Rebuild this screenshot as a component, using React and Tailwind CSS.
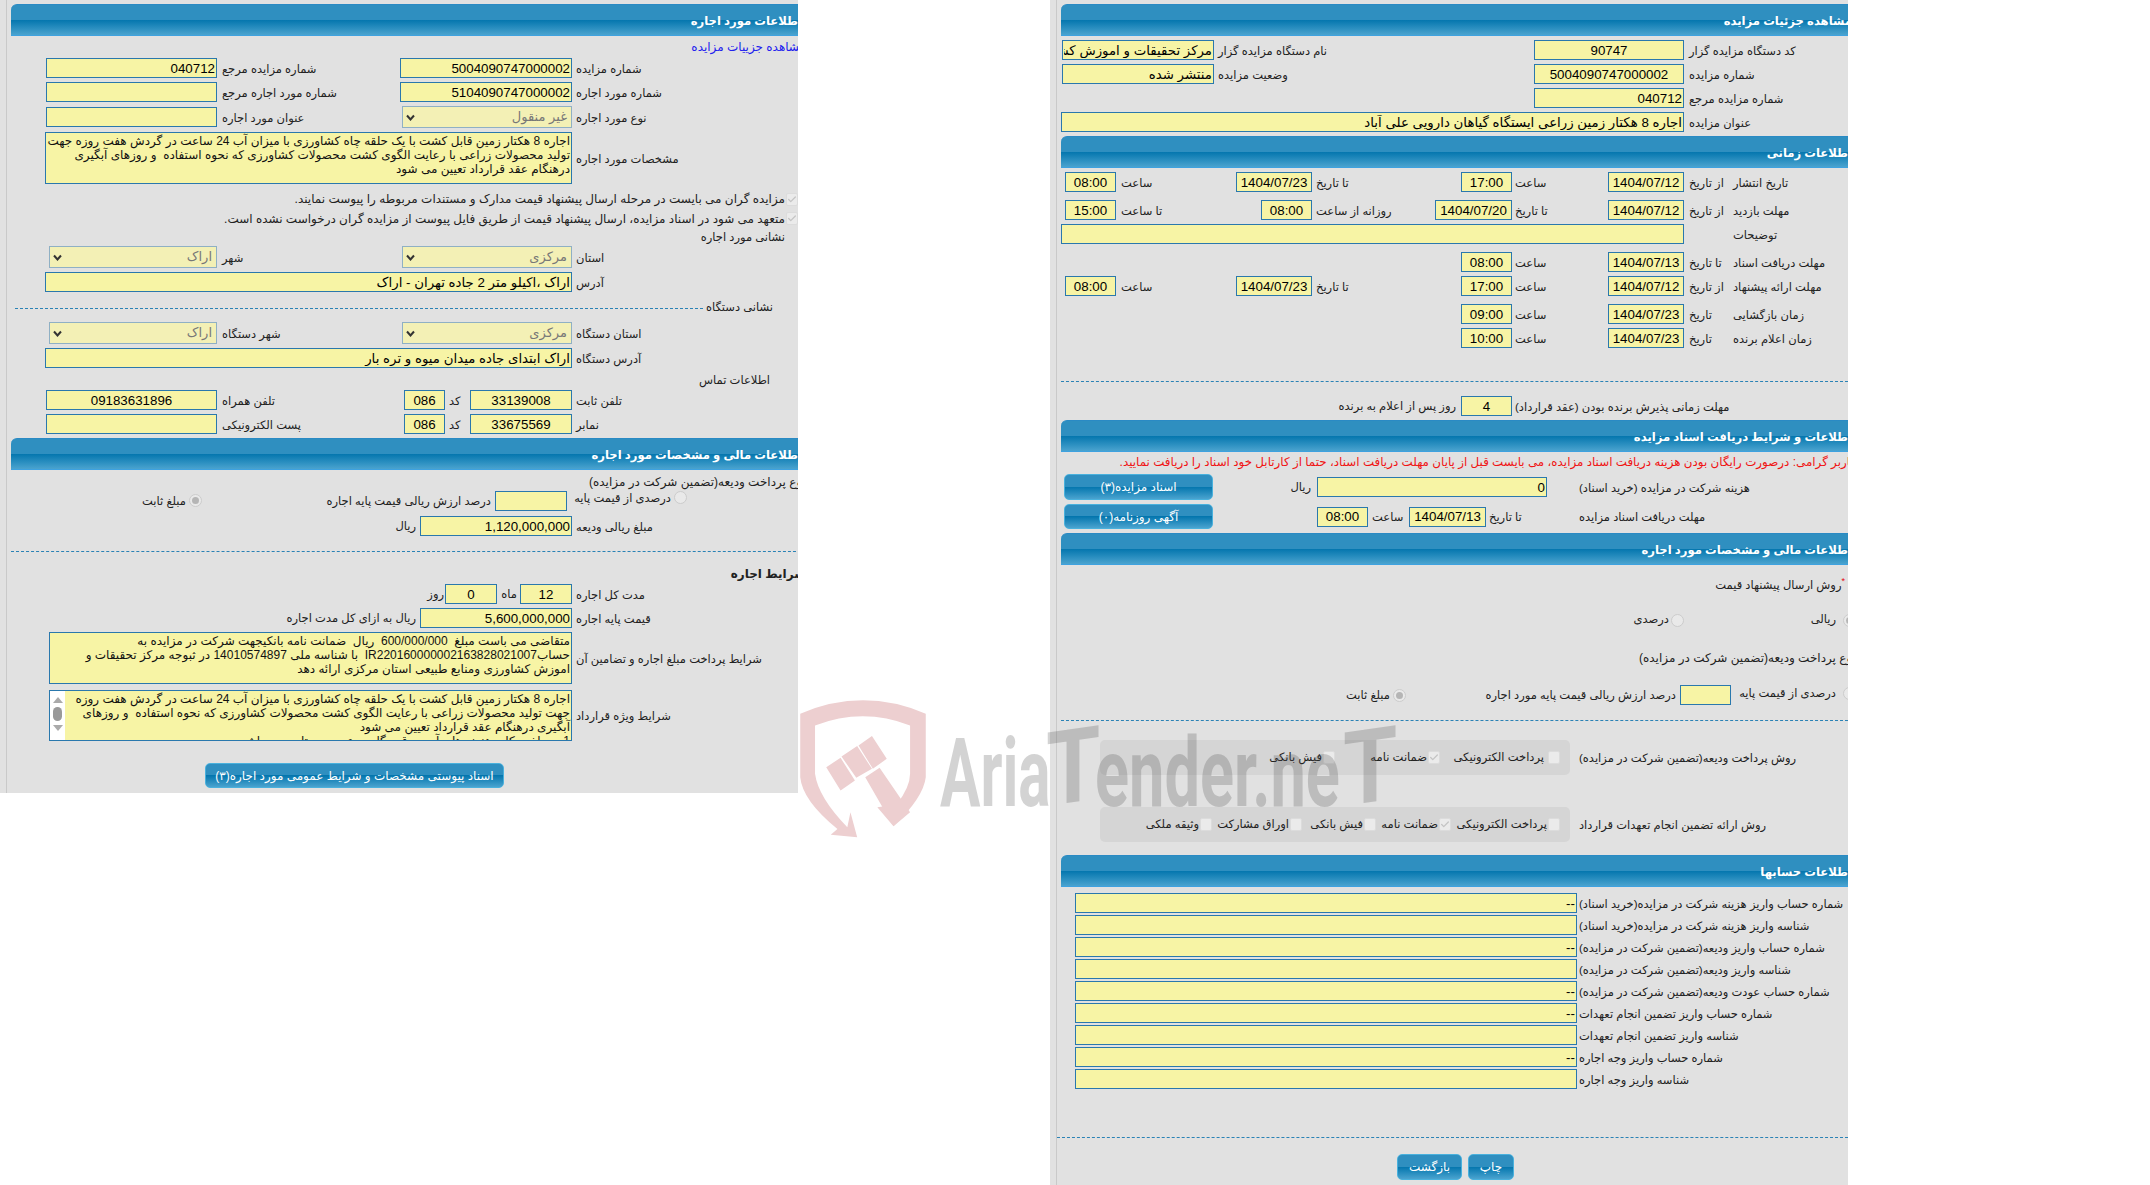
import React from 'react'
import { Check } from 'lucide-react'

const FONT = 'font-["Liberation_Sans","DejaVu_Sans",sans-serif]'
const GRAD = 'bg-[linear-gradient(#2f8fc0_0%,#2f8fc0_50%,#0476ae_50%,#4aa3cf_100%)]'

function Head({ title, className = '' }) {
  return (
    <div className={`ml-[4px] h-[32px] rounded-tl-[6px] border-t border-b border-t-[#2a8ac4] border-b-[#3ea2e0] ${GRAD} flex items-center pt-[2px] pr-[4px] text-[11.6px] font-bold text-white whitespace-nowrap ${className}`}>
      {title}
    </div>
  )
}

function Row({ children, className = '' }) {
  return <div className={`flex items-center h-[20px] ${className}`}>{children}</div>
}

// text sits at the left of its cell, next to the field
function Lbl({ children, className = '' }) {
  return (
    <div className={`shrink-0 flex justify-end pt-[3px] whitespace-nowrap text-[11.5px] text-[#222] ${className}`}>
      <span>{children}</span>
    </div>
  )
}

function Txt({ children, size = 'text-[11.5px]', className = '' }) {
  return <div className={`shrink-0 whitespace-nowrap text-[#222] ${size} ${className}`}>{children}</div>
}

function Inp({ value = '', className = '' }) {
  return (
    <input
      readOnly
      value={value}
      className={`shrink-0 h-[20px] border border-[#2a78ad] bg-[#f7f4a5] px-[1px] text-[13.33px] text-black outline-none ${FONT} ${className}`}
    />
  )
}

function Sel({ value, className = '' }) {
  return (
    <div className={`shrink-0 h-[22px] border border-[#8fb0c4] bg-[#f3f0b5] flex items-center justify-between pr-[4px] pl-[3px] text-[13px] text-[#777] ${className}`}>
      <span>{value}</span>
      <svg width="9" height="7" viewBox="0 0 9 7"><path d="M1 1.5 L4.5 5.5 L8 1.5" fill="none" stroke="#333" strokeWidth="2" /></svg>
    </div>
  )
}

function Radio({ on, className = '' }) {
  return (
    <span className={`shrink-0 w-[13px] h-[13px] rounded-full border border-[#ccc] bg-[#e9e9e9] flex items-center justify-center ${className}`}>
      {on && <span className="w-[7px] h-[7px] rounded-full bg-[#b5b5b5]" />}
    </span>
  )
}

function Box({ on, className = '' }) {
  return (
    <span className={`shrink-0 w-[12px] h-[13px] rounded-[2px] border border-[#dcdcdc] bg-[#ebebeb] flex items-center justify-center ${className}`}>
      {on && <Check size={11} strokeWidth={3} className="text-[#c4c4c4]" />}
    </span>
  )
}

function Area({ lines, className = '' }) {
  return (
    <div className={`shrink-0 h-[52px] overflow-hidden border border-[#2a78ad] bg-[#f7f4a5] pt-[1px] px-[1px] text-[12px] leading-[14px] text-[#111] ${className}`}>
      {lines.map((l) => <div key={l} className="whitespace-pre">{l}</div>)}
    </div>
  )
}

function Btn({ children, className = '' }) {
  return (
    <div className={`shrink-0 rounded-[5px] border border-[#49b1dd] ${GRAD} flex items-center justify-center text-[12px] text-white whitespace-nowrap ${className}`}>
      {children}
    </div>
  )
}

function Dash({ className = '' }) {
  return <div className={`border-t border-dashed border-[#2a82b5] ${className}`} />
}

function LeftPanel() {
  return (
    <div dir="rtl" className="w-[798px] h-[793px] shrink-0 overflow-hidden bg-[#e1e1e1]">
      <div className="ml-[6px] -mr-[8px] h-full border-l border-[#c9c9c9] pt-[4px]">
        <Head title="اطلاعات مورد اجاره" />
        <div className="h-[22px] flex items-center text-[12px] text-[#2222ee] whitespace-nowrap">مشاهده جزییات مزایده</div>

        <Row>
          <Lbl className="w-[234px] pl-[4px]">شماره مزایده</Lbl>
          <Inp value="5004090747000002" className="w-[172px]" />
          <Lbl className="w-[183px] pl-[5px]">شماره مزایده مرجع</Lbl>
          <Inp value="040712" className="w-[171px]" />
        </Row>
        <Row className="mt-[4px]">
          <Lbl className="w-[234px] pl-[4px]">شماره مورد اجاره</Lbl>
          <Inp value="5104090747000002" className="w-[172px]" />
          <Lbl className="w-[183px] pl-[5px]">شماره مورد اجاره مرجع</Lbl>
          <Inp className="w-[171px]" />
        </Row>
        <Row className="mt-[5px]">
          <Lbl className="w-[234px] pl-[4px]">نوع مورد اجاره</Lbl>
          <Sel value="غیر منقول" className="w-[170px]" />
          <Lbl className="w-[185px] pl-[5px]">عنوان مورد اجاره</Lbl>
          <Inp className="w-[171px]" />
        </Row>
        <div className="flex items-center mt-[5px]">
          <Lbl className="w-[234px] pl-[4px]">مشخصات مورد اجاره</Lbl>
          <Area
            className="w-[527px]"
            lines={[
              'اجاره 8 هکتار زمین قابل کشت با یک حلقه چاه کشاورزی با میزان آب 24 ساعت در گردش هفت روزه جهت',
              'تولید محصولات زراعی با رعایت الگوی کشت محصولات کشاورزی که نحوه استفاده  و روزهای آبگیری',
              'درهنگام عقد قرارداد تعیین می شود',
            ]}
          />
        </div>

        <div className="flex items-center h-[20px] mt-[5px] pr-[8px]">
          <Box on className="ml-[1px]" />
          <Txt size="text-[12px]">مزایده گران می بایست در مرحله ارسال پیشنهاد قیمت مدارک و مستندات مربوطه را پیوست نمایند.</Txt>
        </div>
        <div className="flex items-center h-[19px] pr-[8px]">
          <Box on className="ml-[1px]" />
          <Txt size="text-[12px]">متعهد می شود در اسناد مزایده، ارسال پیشنهاد قیمت از طریق فایل پیوست از مزایده گران درخواست نشده است.</Txt>
        </div>
        <Txt className="h-[18px] pr-[21px] leading-[18px]">نشانی مورد اجاره</Txt>

        <div className="flex items-center h-[22px]">
          <Lbl className="w-[234px] pl-[4px]">استان</Lbl>
          <Sel value="مرکزی" className="w-[170px]" />
          <Lbl className="w-[185px] pl-[5px]">شهر</Lbl>
          <Sel value="اراک" className="w-[168px]" />
        </div>
        <Row className="mt-[4px]">
          <Lbl className="w-[234px] pl-[4px]">آدرس</Lbl>
          <Inp value="اراک ،اکیلو متر 2 جاده تهران - اراک" className="w-[527px]" />
        </Row>

        <div className="flex items-center h-[20px] mt-[6px] pr-[33px] pl-[8px]">
          <Txt>نشانی دستگاه</Txt>
          <Dash className="flex-1 mr-[3px]" />
        </div>
        <div className="flex items-center h-[22px] mt-[4px]">
          <Lbl className="w-[234px] pl-[4px]">استان دستگاه</Lbl>
          <Sel value="مرکزی" className="w-[170px]" />
          <Lbl className="w-[185px] pl-[5px]">شهر دستگاه</Lbl>
          <Sel value="اراک" className="w-[168px]" />
        </div>
        <Row className="mt-[4px]">
          <Lbl className="w-[234px] pl-[4px]">آدرس دستگاه</Lbl>
          <Inp value="اراک ابتدای جاده میدان میوه و تره بار" className="w-[527px]" />
        </Row>
        <Txt className="h-[22px] pr-[36px] leading-[24px]">اطلاعات تماس</Txt>
        <Row>
          <Lbl className="w-[234px] pl-[4px]">تلفن ثابت</Lbl>
          <Inp value="33139008" className="w-[102px] text-center" />
          <Lbl className="w-[25px] pl-[4px]">کد</Lbl>
          <Inp value="086" className="w-[41px] text-center" />
          <Lbl className="w-[187px] pl-[5px]">تلفن همراه</Lbl>
          <Inp value="09183631896" className="w-[171px] text-center" />
        </Row>
        <Row className="mt-[4px]">
          <Lbl className="w-[234px] pl-[4px]">نمابر</Lbl>
          <Inp value="33675569" className="w-[102px] text-center" />
          <Lbl className="w-[25px] pl-[4px]">کد</Lbl>
          <Inp value="086" className="w-[41px] text-center" />
          <Lbl className="w-[187px] pl-[5px]">پست الکترونیکی</Lbl>
          <Inp className="w-[171px]" />
        </Row>

        <Head title="اطلاعات مالی و مشخصات مورد اجاره" className="mt-[4px]" />
        <Txt size="text-[12px]" className="h-[20px] leading-[24px]">نوع پرداخت ودیعه(تضمین شرکت در مزایده)</Txt>
        <div className="flex items-center h-[19px] mt-[1px]">
          <div className="w-[119px] shrink-0" />
          <Radio className="-mt-[6px]" />
          <Txt className="w-[107px] pr-[3px] -mt-[3px]">درصدی از قیمت پایه</Txt>
          <Inp className="w-[72px]" />
          <Txt className="w-[293px] pr-[4px] pt-[3px]">درصد ارزش ریالی قیمت پایه اجاره</Txt>
          <Radio on />
          <Txt className="pr-[3px] pt-[2px]">مبلغ ثابت</Txt>
        </div>
        <Row className="mt-[6px]">
          <Lbl className="w-[234px] pl-[4px]">مبلغ ریالی ودیعه</Lbl>
          <Inp value="1,120,000,000" className="w-[152px]" />
          <Txt className="pr-[4px] pt-[2px]">ریال</Txt>
        </Row>
        <Dash className="mt-[15px] ml-[4px]" />
        <div className="h-[32px] flex items-center pt-[12px] text-[12px] font-bold text-[#222] whitespace-nowrap">شرایط اجاره</div>
        <Row>
          <Lbl className="w-[234px] pl-[4px]">مدت کل اجاره</Lbl>
          <Inp value="12" className="w-[52px] text-center" />
          <Txt className="w-[23px] pr-[3px] pt-[2px]">ماه</Txt>
          <Inp value="0" className="w-[52px] text-center" />
          <Txt className="pr-[1px] pt-[2px]">روز</Txt>
        </Row>
        <Row className="mt-[4px]">
          <Lbl className="w-[234px] pl-[4px]">قیمت پایه اجاره</Lbl>
          <Inp value="5,600,000,000" className="w-[152px]" />
          <Txt className="pr-[4px] pt-[2px]">ریال به ازای کل مدت اجاره</Txt>
        </Row>
        <div className="flex items-center mt-[4px]">
          <Lbl className="w-[234px] pl-[4px]">شرایط پرداخت مبلغ اجاره و تضامین آن</Lbl>
          <Area
            className="w-[523px]"
            lines={[
              'متقاضی می باست مبلغ  600/000/000  ریال  ضمانت نامه بانکیجهت شرکت در مزایده به',
              'حسابIR220160000002163828021007  با شناسه ملی 14010574897 در ثبوجه مرکز تحقیقات و',
              'اموزش کشاورزی ومنابع طبیعی استان مرکزی ارائه دهد',
            ]}
          />
        </div>
        <div className="flex items-center mt-[6px]">
          <Lbl className="w-[234px] pl-[4px]">شرایط ویژه قرارداد</Lbl>
          <div className="relative w-[523px] h-[51px] shrink-0 overflow-hidden border border-[#2a78ad] bg-[#f7f4a5] pt-[1px] pl-[16px] pr-[1px] text-[12px] leading-[14px] text-[#111]">
            <div className="whitespace-pre">اجاره 8 هکتار زمین قابل کشت با یک حلقه چاه کشاورزی با میزان آب 24 ساعت در گردش هفت روزه</div>
            <div className="whitespace-pre">جهت تولید محصولات زراعی با رعایت الگوی کشت محصولات کشاورزی که نحوه استفاده  و روزهای</div>
            <div className="whitespace-pre">آبگیری درهنگام عقد قرارداد تعیین می شود</div>
            <div className="whitespace-pre">1- پرداخت کلیه هزینه های آب، برق و گاز بر عهده مستاجر می باشد</div>
            <div className="absolute left-0 top-0 bottom-0 w-[15px] bg-white flex flex-col items-center pt-[6px]">
              <span className="w-0 h-0 border-x-[5px] border-x-transparent border-b-[6px] border-b-[#aaa]" />
              <span className="w-[9px] h-[14px] mt-[4px] rounded-full bg-[#999]" />
              <span className="w-0 h-0 mt-[4px] border-x-[5px] border-x-transparent border-t-[6px] border-t-[#aaa]" />
            </div>
          </div>
        </div>
        <div className="flex pr-[302px] mt-[22px]">
          <Btn className="w-[299px] h-[25px]">اسناد پیوستی مشخصات و شرایط عمومی مورد اجاره(۳)</Btn>
        </div>
      </div>
    </div>
  )
}

function DateRow({ a, b, date, className = '', children }) {
  return (
    <Row className={className}>
      <Lbl className="w-[123px]">{a}</Lbl>
      <Lbl className="w-[49px] pl-[5px]">{b}</Lbl>
      <Inp value={date} className="w-[76px] text-center" />
      {children}
    </Row>
  )
}

function RightPanel() {
  const accounts = [
    ['شماره حساب واریز هزینه شرکت در مزایده(خرید اسناد)', '--'],
    ['شناسه واریز هزینه شرکت در مزایده(خرید اسناد)', ''],
    ['شماره حساب واریز ودیعه(تضمین شرکت در مزایده)', '--'],
    ['شناسه واریز ودیعه(تضمین شرکت در مزایده)', ''],
    ['شماره حساب عودت ودیعه(تضمین شرکت در مزایده)', '--'],
    ['شماره حساب واریز تضمین انجام تعهدات', '--'],
    ['شناسه واریز تضمین انجام تعهدات', ''],
    ['شماره حساب واریز وجه اجاره', '--'],
    ['شناسه واریز وجه اجاره', ''],
  ]
  return (
    <div dir="rtl" className="w-[798px] h-[1185px] shrink-0 overflow-hidden bg-[#e1e1e1]">
      <div className="ml-[6px] -mr-[8px] h-full border-l border-[#c9c9c9] pt-[4px]">
        <Head title="مشاهده جزئیات مزایده" />
        <Row className="mt-[4px]">
          <Lbl className="w-[172px] pl-[5px]">کد دستگاه مزایده گزار</Lbl>
          <Inp value="90747" className="w-[150px] text-center" />
          <Lbl className="w-[320px] pl-[4px]">نام دستگاه مزایده گزار</Lbl>
          <Inp value="مرکز تحقیقات و اموزش کشاورزی و منابع طبیعی" className="w-[152px]" />
        </Row>
        <Row className="mt-[4px]">
          <Lbl className="w-[172px] pl-[5px]">شماره مزایده</Lbl>
          <Inp value="5004090747000002" className="w-[150px] text-center" />
          <Lbl className="w-[320px] pl-[4px]">وضعیت مزایده</Lbl>
          <Inp value="منتشر شده" className="w-[152px]" />
        </Row>
        <Row className="mt-[4px]">
          <Lbl className="w-[172px] pl-[5px]">شماره مزایده مرجع</Lbl>
          <Inp value="040712" className="w-[150px]" />
        </Row>
        <Row className="mt-[4px]">
          <Lbl className="w-[172px] pl-[5px]">عنوان مزایده</Lbl>
          <Inp value="اجاره 8 هکتار زمین زراعی ایستگاه گیاهان دارویی علی آباد" className="w-[623px]" />
        </Row>

        <Head title="اطلاعات زمانی" className="mt-[4px]" />
        <DateRow a="تاریخ انتشار" b="از تاریخ" date="1404/07/12" className="mt-[4px]">
          <Lbl className="w-[96px] pl-[3px]">ساعت</Lbl>
          <Inp value="17:00" className="w-[51px] text-center" />
          <Lbl className="w-[149px] pl-[4px]">تا تاریخ</Lbl>
          <Inp value="1404/07/23" className="w-[76px] text-center" />
          <Lbl className="w-[120px] pl-[5px]">ساعت</Lbl>
          <Inp value="08:00" className="w-[51px] text-center" />
        </DateRow>
        <DateRow a="مهلت بازدید" b="از تاریخ" date="1404/07/12" className="mt-[8px]">
          <Lbl className="w-[96px] pl-[3px]">تا تاریخ</Lbl>
          <Inp value="1404/07/20" className="w-[77px] text-center" />
          <Lbl className="w-[123px] pl-[4px]">روزانه از ساعت</Lbl>
          <Inp value="08:00" className="w-[51px] text-center" />
          <Lbl className="w-[145px] pl-[5px]">تا ساعت</Lbl>
          <Inp value="15:00" className="w-[51px] text-center" />
        </DateRow>
        <Row className="mt-[4px]">
          <Lbl className="w-[123px]">توضیحات</Lbl>
          <div className="w-[49px] shrink-0" />
          <Inp className="w-[623px]" />
        </Row>
        <DateRow a="مهلت دریافت اسناد" b="تا تاریخ" date="1404/07/13" className="mt-[8px]">
          <Lbl className="w-[96px] pl-[3px]">ساعت</Lbl>
          <Inp value="08:00" className="w-[51px] text-center" />
        </DateRow>
        <DateRow a="مهلت ارائه پیشنهاد" b="از تاریخ" date="1404/07/12" className="mt-[4px]">
          <Lbl className="w-[96px] pl-[3px]">ساعت</Lbl>
          <Inp value="17:00" className="w-[51px] text-center" />
          <Lbl className="w-[149px] pl-[4px]">تا تاریخ</Lbl>
          <Inp value="1404/07/23" className="w-[76px] text-center" />
          <Lbl className="w-[120px] pl-[5px]">ساعت</Lbl>
          <Inp value="08:00" className="w-[51px] text-center" />
        </DateRow>
        <DateRow a="زمان بازگشایی" b="تاریخ" date="1404/07/23" className="mt-[8px]">
          <Lbl className="w-[96px] pl-[3px]">ساعت</Lbl>
          <Inp value="09:00" className="w-[51px] text-center" />
        </DateRow>
        <DateRow a="زمان اعلام برنده" b="تاریخ" date="1404/07/23" className="mt-[4px]">
          <Lbl className="w-[96px] pl-[3px]">ساعت</Lbl>
          <Inp value="10:00" className="w-[51px] text-center" />
        </DateRow>
        <Dash className="mt-[33px] ml-[4px] mr-[8px]" />
        <Row className="mt-[14px]">
          <Lbl className="w-[344px] pl-[3px]">مهلت زمانی پذیرش برنده بودن (عقد قرارداد)</Lbl>
          <Inp value="4" className="w-[51px] text-center" />
          <Txt className="pr-[5px] pt-[2px]">روز پس از اعلام به برنده</Txt>
        </Row>

        <Head title="اطلاعات و شرایط دریافت اسناد مزایده" className="mt-[4px]" />
        <div className="h-[22px] flex items-center text-[11.9px] text-[#f01414] whitespace-nowrap">کاربر گرامی: درصورت رایگان بودن هزینه دریافت اسناد مزایده، می بایست قبل از پایان مهلت دریافت اسناد، حتما از کارتابل خود اسناد را دریافت نمایید.</div>
        <div className="flex items-center h-[26px]">
          <Lbl className="w-[309px] pl-[32px]">هزینه شرکت در مزایده (خرید اسناد)</Lbl>
          <Inp value="0" className="w-[230px]" />
          <Txt className="w-[104px] pr-[6px] pt-[2px]">ریال</Txt>
          <Btn className="w-[149px] h-[26px]">اسناد مزایده(۳)</Btn>
        </div>
        <div className="flex items-center h-[25px] mt-[4px]">
          <Lbl className="w-[309px] pl-[32px]">مهلت دریافت اسناد مزایده</Lbl>
          <Lbl className="w-[61px] pl-[3px]">تا تاریخ</Lbl>
          <Inp value="1404/07/13" className="w-[77px] text-center" />
          <Lbl className="w-[41px] pl-[4px]">ساعت</Lbl>
          <Inp value="08:00" className="w-[51px] text-center" />
          <div className="w-[104px] shrink-0" />
          <Btn className="w-[149px] h-[25px]">آگهی روزنامه(۰)</Btn>
        </div>

        <Head title="اطلاعات مالی و مشخصات مورد اجاره" className="mt-[4px]" />
        <Txt className="h-[20px] mt-[6px] pr-[11px] leading-[20px]">
          <span className="text-red-600 align-super text-[9px]">*</span>روش ارسال پیشنهاد قیمت
        </Txt>
        <div className="flex items-center h-[20px] mt-[19px]">
          <Radio on />
          <Txt className="w-[159px] pr-[7px]">ریالی</Txt>
          <Radio />
          <Txt className="pr-[2px]">درصدی</Txt>
        </div>
        <Txt size="text-[12px]" className="h-[20px] mt-[18px] leading-[20px]">نوع پرداخت ودیعه(تضمین شرکت در مزایده)</Txt>
        <div className="flex items-center h-[20px] mt-[17px]">
          <Radio className="-mt-[4px]" />
          <Txt className="w-[112px] pr-[7px] -mt-[2px]">درصدی از قیمت پایه</Txt>
          <Inp className="w-[51px]" />
          <Txt className="w-[274px] pr-[4px] pt-[2px]">درصد ارزش ریالی قیمت پایه مورد اجاره</Txt>
          <Radio on />
          <Txt className="pr-[3px] pt-[2px]">مبلغ ثابت</Txt>
        </div>
        <Dash className="mt-[15px] ml-[4px] mr-[8px]" />
        <div className="flex items-center h-[35px] mt-[19px]">
          <Lbl className="w-[286px] pl-[9px]">روش پرداخت ودیعه(تضمین شرکت در مزایده)</Lbl>
          <div className="w-[470px] h-[35px] shrink-0 rounded-[5px] bg-[#d5d5d5] flex items-center pr-[10px]">
            <Box />
            <Txt className="w-[108px] pr-[4px]">پرداخت الکترونیکی</Txt>
            <Box on />
            <Txt className="w-[93px] pr-[1px]">ضمانت نامه</Txt>
            <Box />
            <Txt className="pr-[1px]">فیش بانکی</Txt>
          </div>
        </div>
        <div className="flex items-center h-[35px] mt-[32px]">
          <Lbl className="w-[286px] pl-[9px]">روش ارائه تضمین انجام تعهدات قرارداد</Lbl>
          <div className="w-[470px] h-[35px] shrink-0 rounded-[5px] bg-[#d5d5d5] flex items-center pr-[10px]">
            <Box />
            <Txt className="w-[97px] pr-[1px]">پرداخت الکترونیکی</Txt>
            <Box on />
            <Txt className="w-[63px] pr-[1px]">ضمانت نامه</Txt>
            <Box />
            <Txt className="w-[62px] pr-[1px]">فیش بانکی</Txt>
            <Box />
            <Txt className="w-[78px] pr-[1px]">اوراق مشارکت</Txt>
            <Box />
            <Txt className="pr-[1px]">وثیقه ملکی</Txt>
          </div>
        </div>

        <Head title="اطلاعات حسابها" className="mt-[13px]" />
        <div className="mt-[6px] flex flex-col gap-[2px]">
          {accounts.map(([label, val]) => (
            <Row key={label}>
              <Lbl className="w-[279px] pl-[2px]">{label}</Lbl>
              <Inp value={val} className="w-[502px]" />
            </Row>
          ))}
        </div>
        <Dash className="mt-[48px] mr-[8px]" />
        <div className="flex pr-[342px] gap-[6px] mt-[16px]">
          <Btn className="w-[46px] h-[26px]">چاپ</Btn>
          <Btn className="w-[65px] h-[26px]">بازگشت</Btn>
        </div>
      </div>
    </div>
  )
}

function Watermark() {
  return (
    <div className="absolute left-[798px] top-[697px] pointer-events-none flex items-start">
      <svg width="130" height="142" viewBox="40 50 290 425" preserveAspectRatio="none" className="shrink-0">
        <path
          fill="#edcfd0"
          d="M45 100 Q185 20 325 100 L325 290 Q320 350 253 437 L217 380 L260 372 Q290 320 290 280 L290 135 Q185 80 78 135 L78 280 Q85 350 150 440 L157 395 L172 470 L113 462 L128 445 Q50 360 45 290 Z"
        />
        <path fill="#edcfd0" d="M103 260 L135 232 L167 300 L135 330 Z M137 228 L172 197 L205 265 L170 292 Z M175 195 L205 167 L238 235 L207 265 Z M190 290 L222 262 L290 395 L253 437 Z" />
      </svg>
      <div className="mt-[22px] ml-[12px] flex items-baseline font-['Roboto',sans-serif] font-bold text-[rgba(80,80,80,0.25)] leading-none whitespace-nowrap">
        <span className="inline-block text-[97px] origin-left scale-x-[0.62] w-[106px]">Aria</span>
        <span className="inline-block text-[103px] origin-bottom-left scale-x-[0.85] -skew-y-[7deg] w-[49px]">T</span>
        <span className="inline-block text-[97px] origin-left scale-x-[0.65] w-[248px]">ender.ne</span>
        <span className="inline-block text-[103px] origin-bottom-left scale-x-[0.85] -skew-y-[7deg]">T</span>
      </div>
    </div>
  )
}

export default function App() {
  return (
    <div className={`relative w-[2150px] h-[1185px] overflow-hidden bg-white flex items-start ${FONT}`}>
      <LeftPanel />
      <div className="w-[252px] shrink-0" />
      <RightPanel />
      <Watermark />
    </div>
  )
}
